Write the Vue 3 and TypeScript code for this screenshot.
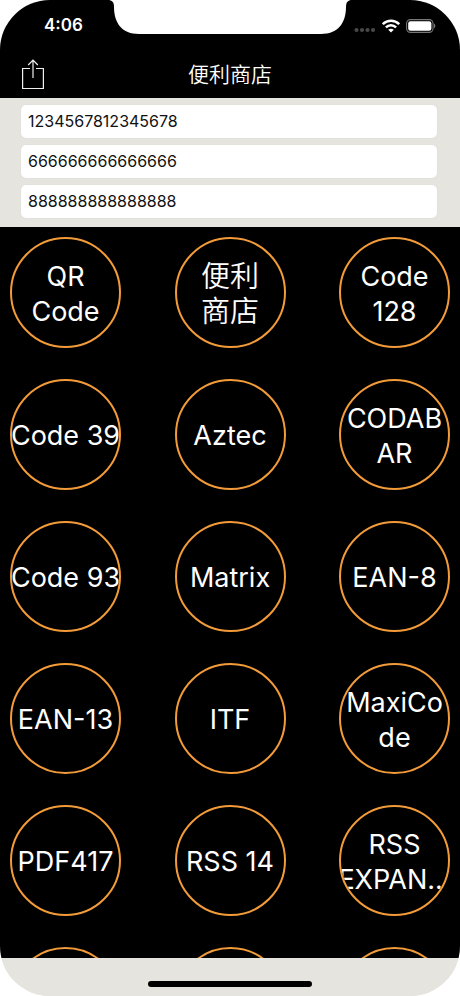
<script setup lang="ts">
import { ref } from 'vue'

interface CodeType {
  id: string
  lines: string[]
  han?: boolean
}

const fields = ref([
  { id: 'code-1', label: 'Code 1', value: '1234567812345678' },
  { id: 'code-2', label: 'Code 2', value: '666666666666666' },
  { id: 'code-3', label: 'Code 3', value: '888888888888888' },
])

const codeTypes: CodeType[] = [
  { id: 'qr', lines: ['QR', 'Code'] },
  { id: 'store', lines: ['便利', '商店'], han: true },
  { id: 'code128', lines: ['Code', '128'] },
  { id: 'code39', lines: ['Code 39'] },
  { id: 'aztec', lines: ['Aztec'] },
  { id: 'codabar', lines: ['CODAB', 'AR'] },
  { id: 'code93', lines: ['Code 93'] },
  { id: 'matrix', lines: ['Matrix'] },
  { id: 'ean8', lines: ['EAN-8'] },
  { id: 'ean13', lines: ['EAN-13'] },
  { id: 'itf', lines: ['ITF'] },
  { id: 'maxicode', lines: ['MaxiCo', 'de'] },
  { id: 'pdf417', lines: ['PDF417'] },
  { id: 'rss14', lines: ['RSS 14'] },
  { id: 'rss-expanded', lines: ['RSS', 'EXPAN…'] },
  { id: 'more-1', lines: [] },
  { id: 'more-2', lines: [] },
  { id: 'more-3', lines: [] },
]
</script>

<template>
  <div class="screen">
    <svg class="notch" viewBox="0 0 244 34" aria-hidden="true">
      <path d="M0 0C4 0 6 2 6 7C6 23 14 34 31 34H213C230 34 238 23 238 7C238 2 240 0 244 0Z" fill="#fff" />
    </svg>

    <div class="status">
      <span class="time">4:06</span>
      <div class="indicators">
        <svg class="signal" width="22" height="6" viewBox="0 0 22 6" aria-hidden="true" fill="#48484a">
          <circle cx="2.5" cy="3" r="2.1" /><circle cx="8" cy="3" r="2.1" />
          <circle cx="13.5" cy="3" r="2.1" /><circle cx="19" cy="3" r="2.1" />
        </svg>
        <svg width="18" height="14" viewBox="0 0 18 14" aria-hidden="true">
          <g fill="none" stroke="#fff" stroke-width="2.5">
            <path d="M.8 5.2C5.4 .6 12.6 .6 17.2 5.2" />
            <path d="M3.9 8.4C6.800 5.500 11.200 5.500 14.100 8.400" />
          </g>
          <path d="M9 13.500L6.200 10.800C7.800 9.300 10.200 9.300 11.800 10.800Z" fill="#fff" />
        </svg>
        <svg width="30" height="14" viewBox="0 0 30 14" aria-hidden="true">
          <rect x=".6" y=".6" width="26.400" height="12.800" rx="3.800" fill="none" stroke="#77777a" stroke-width="1.100" />
          <rect x="2.200" y="2.200" width="23.200" height="9.600" rx="2.200" fill="#fff" />
          <path d="M28 4.600C29.800 5.400 29.800 8.600 28 9.400Z" fill="#77777a" />
        </svg>
      </div>
    </div>

    <header class="bar">
      <button class="share" type="button" aria-label="Share">
        <svg width="22" height="31" viewBox="0 0 22 31" fill="none" stroke="#f0f0f0" stroke-width="1.200" aria-hidden="true">
          <path d="M8 9.500H.6V29.500H21.400V9.500H14" />
          <path d="M11 19V1.500M6.200 6L11 1.200L15.800 6" />
        </svg>
      </button>
      <h1 class="title">便利商店</h1>
    </header>

    <form class="fields" @submit.prevent>
      <input
        v-for="field in fields"
        :id="field.id"
        :key="field.id"
        v-model="field.value"
        class="field"
        type="text"
        inputmode="numeric"
        :aria-label="field.label"
      />
    </form>

    <main class="grid">
      <button
        v-for="type in codeTypes"
        :key="type.id"
        class="disc"
        :class="{ han: type.han }"
        type="button"
      >
        <span v-for="line in type.lines" :key="line" class="line">{{ line }}</span>
      </button>
    </main>

    <footer class="home"><span class="indicator"></span></footer>
  </div>
</template>

<style>
body {
  margin: 0;
  background: #fff;
}
</style>

<style scoped>
.screen {
  position: relative;
  display: flex;
  flex-direction: column;
  height: 100vh;
  overflow: hidden;
  border-radius: 50px;
  background: #e5e4de;
  color: #fff;
  font-family: Inter, 'Noto Sans CJK TC', sans-serif;
}

.notch {
  position: absolute;
  top: 0;
  left: 50%;
  width: 244px;
  height: 34px;
  transform: translateX(-50%);
}

.status {
  display: flex;
  justify-content: space-between;
  align-items: center;
  flex: none;
  height: 51px;
  padding: 0 24px 0 44px;
  background: #000;
}

.time {
  font-size: 17px;
  font-weight: 600;
  line-height: 21px;
}

.indicators {
  display: flex;
  align-items: center;
  gap: 6px;
}

.signal {
  margin-top: 8px;
}

.bar {
  display: grid;
  grid-template-columns: 1fr auto 1fr;
  align-items: center;
  flex: none;
  height: 47px;
  padding: 0 22px;
  background: #000;
}

.share {
  display: flex;
  justify-self: start;
  padding: 0;
  border: 0;
  background: none;
}

.title {
  margin: 0;
  font-size: 21px;
  font-weight: 350;
  line-height: 31px;
}

.fields {
  display: flex;
  flex-direction: column;
  gap: 7px;
  flex: none;
  padding: 7px 23px 9px 21px;
  background: #e5e4de;
}

.field {
  box-sizing: border-box;
  width: 100%;
  height: 33px;
  padding: 0 7px 2px;
  border: 0;
  border-radius: 5px;
  outline: 0;
  background: #fff;
  box-shadow: 0 0 1px #cfcec9;
  color: #111;
  font-family: inherit;
  font-size: 16px;
}

.grid {
  display: grid;
  grid-template-columns: repeat(3, 111px);
  grid-auto-rows: 111px;
  justify-content: space-between;
  row-gap: 31px;
  flex: 1;
  min-height: 0;
  overflow: hidden;
  padding: 10px 10px 0;
  background: #000;
}

.disc {
  display: flex;
  flex-direction: column;
  justify-content: center;
  align-items: center;
  overflow: hidden;
  padding: 2px 0 0;
  border: 2px solid #f29b38;
  border-radius: 50%;
  background: #000;
  color: #fff;
  font-family: inherit;
  font-size: 27px;
  font-weight: 400;
}

.han {
  font-size: 29px;
  font-weight: 350;
}

.line {
  line-height: 35px;
  white-space: nowrap;
}

.home {
  display: flex;
  justify-content: center;
  flex: none;
  height: 15px;
  padding-top: 23px;
  background: #e5e4de;
}

.indicator {
  width: 164px;
  height: 6px;
  border-radius: 3px;
  background: #000;
}
</style>
